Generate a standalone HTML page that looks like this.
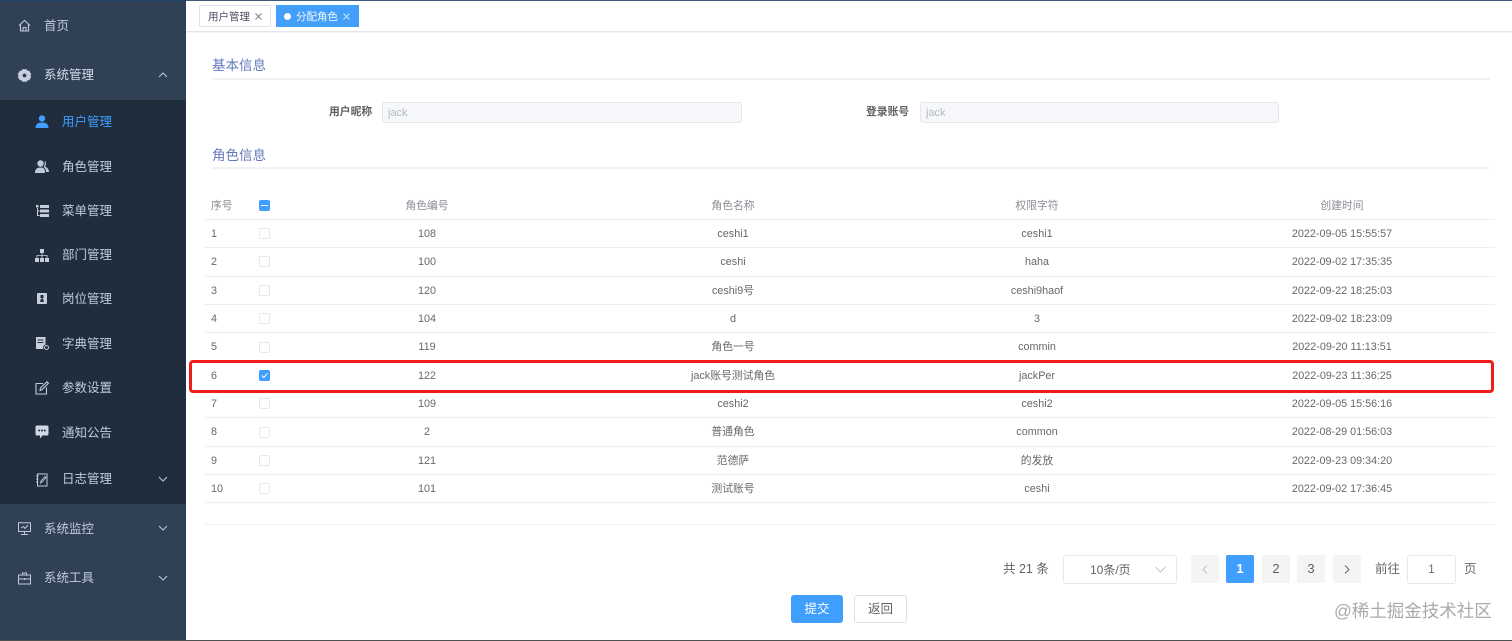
<!DOCTYPE html>
<html lang="zh-CN">
<head>
<meta charset="utf-8">
<title>分配角色</title>
<style>
html,body{margin:0;padding:0;background:#fff}
body{width:1512px;height:641px;position:relative;overflow:hidden;font-family:"Liberation Sans","Noto Sans CJK SC",sans-serif;font-size:10.8px;color:#66686d}
.a{position:absolute;white-space:nowrap}
.side{position:absolute;left:0;top:0;width:186px;height:641px;background:#304156}
.sub{position:absolute;left:0;top:100px;width:186px;height:404px;background:#1f2d3d}
.m{position:absolute;white-space:nowrap;font-size:12.5px;line-height:16px;color:#bfcbd9}
.ic{position:absolute;overflow:visible}
.line{position:absolute;background:#ebeef5;height:1px;left:204px;width:1291px}
.hr{position:absolute;left:212px;width:1278px;height:2px;background:#f1f2f4}
.c{position:absolute;white-space:nowrap;transform:translateX(-50%);line-height:14px;color:#66686d}
.h{color:#8a8d94;font-weight:400}
.cb{position:absolute;left:259px;width:9px;height:9px;border:1px solid #e6e8ec;border-radius:2px;background:#fff;box-sizing:content-box}
.sec{position:absolute;left:212px;font-size:13.5px;line-height:18px;color:#6379bb;white-space:nowrap}
.inp{position:absolute;top:102px;height:19px;background:#f5f7fa;border:1px solid #e4e7ed;border-radius:3px;color:#b5b8be;font-size:11px;line-height:20px;padding-left:5px;box-sizing:content-box}
.lab{position:absolute;top:105px;font-size:10.8px;line-height:14px;font-weight:700;color:#606266;white-space:nowrap}
.pg{position:absolute;top:555px;width:28px;height:28px;background:#f4f4f5;border-radius:2px;text-align:center;line-height:27px;font-size:13px;color:#606266}
</style>
</head>
<body>
<div class="a" style="left:186px;top:0;width:1326px;height:1px;background:#3d5a78"></div>

<!-- Sidebar -->
<div class="side"></div>
<div class="a" style="left:0;top:0;width:186px;height:1px;background:#20406e"></div>
<div class="sub"></div>

<svg class="ic" style="left:18px;top:19px" width="13" height="13" viewBox="0 0 13 13" fill="none" stroke="#bfcbd9" stroke-width="1.1"><path d="M1 6.5 6.5 1.5 12 6.5M2.5 5.5V12H10.500V5.500M5 12V8.500H8V12"/></svg>
<div class="m" style="left:44px;top:18px">首页</div>

<svg class="ic" style="left:18px;top:69px" width="13" height="13" viewBox="0 0 13 13"><path fill="#c6d0dc" fill-rule="evenodd" d="M4.200.3H8.800L9.400 1.800 11.200 1.700 13.300 5.300 12.300 6.500 13.300 7.700 11.200 11.300 9.400 11.200 8.800 12.700H4.200L3.600 11.200 1.800 11.300-.3 7.700.7 6.500-.3 5.300 1.800 1.700 3.600 1.800ZM6.500 4.600A1.900 1.900 0 1 0 6.500 8.400 1.900 1.900 0 1 0 6.500 4.600Z"/></svg>
<div class="m" style="left:44px;top:67px;color:#d5dce5">系统管理</div>
<svg class="ic" style="left:158px;top:72px" width="10" height="6" viewBox="0 0 10 6" fill="none" stroke="#bfcbd9"><path d="M1 5 5 1 9 5"/></svg>

<svg class="ic" style="left:35px;top:115px" width="14" height="13" viewBox="0 0 14 13"><circle cx="7" cy="3.500" r="3.200" fill="#409eff"/><path fill="#409eff" d="M.5 13C.5 9 3 7.500 7 7.500S13.500 9 13.500 13Z"/></svg>
<div class="m" style="left:62px;top:114px;color:#409eff">用户管理</div>

<svg class="ic" style="left:35px;top:160px" width="14" height="13" viewBox="0 0 14 13"><circle cx="5.500" cy="3.500" r="3.200" fill="#bfcbd9"/><path fill="#bfcbd9" d="M0 13C0 9 2 7.500 5.500 7.500S10 9 10 13Z"/><path fill="#bfcbd9" d="M9.500.8C11.500 1.500 11.500 5.500 9.800 6.500 12.500 7.500 14 9.500 14 12H11C11 9.500 10 8 8.500 7 10 5.500 10 2.500 9.500.8Z"/></svg>
<div class="m" style="left:62px;top:159px">角色管理</div>

<svg class="ic" style="left:36px;top:205px" width="13" height="12" viewBox="0 0 13 12" fill="#c6d0dc"><rect x="0" y="0" width="2.500" height="2.500"/><rect x="4" y="0" width="9" height="3"/><rect x="4" y="4.500" width="9" height="3"/><rect x="4" y="9" width="9" height="3"/><path d="M1 3H2V5.500H3.500V6.500H2V10H3.500V11H1Z"/></svg>
<div class="m" style="left:62px;top:203px">菜单管理</div>

<svg class="ic" style="left:35px;top:249px" width="14" height="13" viewBox="0 0 14 13" fill="#c6d0dc"><rect x="5" y="0" width="4" height="4"/><rect x="0" y="9" width="4" height="4"/><rect x="5" y="9" width="4" height="4"/><rect x="10" y="9" width="4" height="4"/><path d="M6.600 4H7.400V6H12.400V9H11.600V6.800H7.400V9H6.600V6.800H2.400V9H1.600V6H6.600Z"/></svg>
<div class="m" style="left:62px;top:247px">部门管理</div>

<svg class="ic" style="left:37px;top:293px" width="10" height="11" viewBox="0 0 10 11"><rect width="10" height="11" rx="1" fill="#c6d0dc"/><rect x="3.500" y="2" width="3" height="3" fill="#1f2d3d"/><path d="M3 9 4 5.500H6L7 9Z" fill="#1f2d3d"/></svg>
<div class="m" style="left:62px;top:291px">岗位管理</div>

<svg class="ic" style="left:35px;top:337px" width="14" height="13" viewBox="0 0 14 13"><path fill="#c6d0dc" d="M1 0H10.500V7.500A3 3 0 0 0 8.500 12H1Z"/><rect x="2.500" y="2.500" width="6" height="1" fill="#1f2d3d"/><rect x="2.500" y="5" width="6" height="1" fill="#1f2d3d"/><circle cx="11.500" cy="10.500" r="2" fill="none" stroke="#bfcbd9"/></svg>
<div class="m" style="left:62px;top:336px">字典管理</div>

<svg class="ic" style="left:35px;top:381px" width="14" height="14" viewBox="0 0 14 14" fill="none" stroke="#bfcbd9" stroke-width="1.100"><path d="M8 2.500H1V13H11.500V6.500"/><path d="M5 9.500 5.500 7 12 .8 13.500 2.300 7 8.800Z"/></svg>
<div class="m" style="left:62px;top:380px">参数设置</div>

<svg class="ic" style="left:35px;top:425px" width="14" height="14" viewBox="0 0 14 14"><path fill="#d0d9e4" d="M2 .5H12A1.500 1.500 0 0 1 13.500 2V9A1.500 1.500 0 0 1 12 10.500H7.500L5 13.500V10.500H2A1.500 1.500 0 0 1 .5 9V2A1.500 1.500 0 0 1 2 .5Z"/><circle cx="4.200" cy="5.500" r="1" fill="#1f2d3d"/><circle cx="7" cy="5.500" r="1" fill="#1f2d3d"/><circle cx="9.800" cy="5.500" r="1" fill="#1f2d3d"/></svg>
<div class="m" style="left:62px;top:425px">通知公告</div>

<svg class="ic" style="left:36px;top:473px" width="12" height="14" viewBox="0 0 12 14" fill="none" stroke="#bfcbd9"><path d="M1.500 1H11V13H1.500Z"/><path d="M0 3H2.500M0 6H2.500M0 9H2.500M4.500 10 5 8 9 3.500 10 4.500 6 9Z" stroke-width=".9"/></svg>
<div class="m" style="left:62px;top:471px">日志管理</div>
<svg class="ic" style="left:158px;top:476px" width="10" height="6" viewBox="0 0 10 6" fill="none" stroke="#bfcbd9"><path d="M1 1 5 5 9 1"/></svg>

<svg class="ic" style="left:18px;top:522px" width="13" height="13" viewBox="0 0 13 13" fill="none" stroke="#bfcbd9"><path d="M.5.800H12.500V9.500H.5ZM3 12.500H10M6.500 9.500V12.500M3 6 5.500 4.500 7 6.500 10 3"/></svg>
<div class="m" style="left:44px;top:521px">系统监控</div>
<svg class="ic" style="left:158px;top:525px" width="10" height="6" viewBox="0 0 10 6" fill="none" stroke="#bfcbd9"><path d="M1 1 5 5 9 1"/></svg>

<svg class="ic" style="left:18px;top:572px" width="13" height="13" viewBox="0 0 13 13" fill="none" stroke="#bfcbd9"><path d="M.5 3H12.500V12H.5ZM4.500 3V1H8.500V3M.5 7H12.500M6.500 6V8"/></svg>
<div class="m" style="left:44px;top:570px">系统工具</div>
<svg class="ic" style="left:158px;top:575px" width="10" height="6" viewBox="0 0 10 6" fill="none" stroke="#bfcbd9"><path d="M1 1 5 5 9 1"/></svg>
<div class="a" style="left:0;top:640px;width:1512px;height:1px;background:#4e5152"></div>

<!-- Tags bar -->
<div class="a" style="left:186px;top:31px;width:1326px;height:1px;background:#e4e5e7"></div>
<div class="a" style="left:186px;top:32px;width:1326px;height:1px;background:#f4f4f5"></div>
<div class="a" style="left:199px;top:5px;width:72px;height:22px;border:1px solid #dfe2e6;box-sizing:border-box;background:#fff"></div>
<div class="a" style="left:208px;top:10px;font-size:10.500px;line-height:14px;color:#495060">用户管理</div>
<svg class="ic" style="left:255px;top:13px" width="7" height="7" viewBox="0 0 7 7" stroke="#777"><path d="M.5.500 6.500 6.500M6.500.500.5 6.500" stroke-width=".9"/></svg>
<div class="a" style="left:276px;top:5px;width:83px;height:22px;background:#42a0fa"></div>
<div class="a" style="left:284px;top:13px;width:7px;height:7px;border-radius:50%;background:#fff"></div>
<div class="a" style="left:296px;top:10px;font-size:10.500px;line-height:14px;color:#f2f8ff">分配角色</div>
<svg class="ic" style="left:343px;top:13px" width="7" height="7" viewBox="0 0 7 7" stroke="#d5e9fd"><path d="M.5.500 6.500 6.500M6.500.500.5 6.500" stroke-width=".9"/></svg>

<!-- Basic info -->
<div class="sec" style="top:57px">基本信息</div>
<div class="hr" style="top:78px"></div>
<div class="lab" style="left:329px">用户昵称</div>
<div class="inp" style="left:382px;width:353px">jack</div>
<div class="lab" style="left:866px">登录账号</div>
<div class="inp" style="left:920px;width:352px">jack</div>
<div class="sec" style="top:147px">角色信息</div>
<div class="hr" style="top:167px"></div>

<!-- Table header -->
<div class="a h" style="left:211px;top:199px;line-height:14px;color:#8a8d94">序号</div>
<div class="a" style="left:259px;top:200px;width:11px;height:11px;border-radius:2px;background:#409eff"></div>
<div class="a" style="left:261px;top:205px;width:7px;height:1px;background:#fff"></div>
<div class="c h" style="left:427px;top:199px;color:#8a8d94">角色编号</div>
<div class="c h" style="left:733px;top:199px;color:#8a8d94">角色名称</div>
<div class="c h" style="left:1037px;top:199px;color:#8a8d94">权限字符</div>
<div class="c h" style="left:1342px;top:199px;color:#8a8d94">创建时间</div>

<div class="line" style="top:219px"></div>
<div class="line" style="top:247px"></div>
<div class="line" style="top:276px"></div>
<div class="line" style="top:304px"></div>
<div class="line" style="top:332px"></div>
<div class="line" style="top:417px"></div>
<div class="line" style="top:446px"></div>
<div class="line" style="top:474px"></div>
<div class="line" style="top:502px"></div>
<div class="line" style="top:524px;background:#eef0f5"></div>

<!-- Rows -->
<div class="a" style="left:211px;top:227px;line-height:14px">1</div><div class="cb" style="top:228px"></div><div class="c" style="left:427px;top:227px">108</div><div class="c" style="left:733px;top:227px">ceshi1</div><div class="c" style="left:1037px;top:227px">ceshi1</div><div class="c" style="left:1342px;top:227px">2022-09-05 15:55:57</div>
<div class="a" style="left:211px;top:255px;line-height:14px">2</div><div class="cb" style="top:256px"></div><div class="c" style="left:427px;top:255px">100</div><div class="c" style="left:733px;top:255px">ceshi</div><div class="c" style="left:1037px;top:255px">haha</div><div class="c" style="left:1342px;top:255px">2022-09-02 17:35:35</div>
<div class="a" style="left:211px;top:284px;line-height:14px">3</div><div class="cb" style="top:285px"></div><div class="c" style="left:427px;top:284px">120</div><div class="c" style="left:733px;top:284px">ceshi9号</div><div class="c" style="left:1037px;top:284px">ceshi9haof</div><div class="c" style="left:1342px;top:284px">2022-09-22 18:25:03</div>
<div class="a" style="left:211px;top:312px;line-height:14px">4</div><div class="cb" style="top:313px"></div><div class="c" style="left:427px;top:312px">104</div><div class="c" style="left:733px;top:312px">d</div><div class="c" style="left:1037px;top:312px">3</div><div class="c" style="left:1342px;top:312px">2022-09-02 18:23:09</div>
<div class="a" style="left:211px;top:340px;line-height:14px">5</div><div class="cb" style="top:342px"></div><div class="c" style="left:427px;top:340px">119</div><div class="c" style="left:733px;top:340px">角色一号</div><div class="c" style="left:1037px;top:340px">commin</div><div class="c" style="left:1342px;top:340px">2022-09-20 11:13:51</div>

<div class="a" style="left:211px;top:369px;line-height:14px">6</div>
<div class="a" style="left:259px;top:370px;width:11px;height:11px;border-radius:2px;background:#409eff"></div>
<svg class="ic" style="left:261px;top:372px" width="7" height="7" viewBox="0 0 7 7" fill="none" stroke="#fff"><path d="M.8 3.500 2.800 5.500 6.500 1.300"/></svg>
<div class="c" style="left:427px;top:369px">122</div><div class="c" style="left:733px;top:369px">jack账号测试角色</div><div class="c" style="left:1037px;top:369px">jackPer</div><div class="c" style="left:1342px;top:369px">2022-09-23 11:36:25</div>

<div class="a" style="left:211px;top:397px;line-height:14px">7</div><div class="cb" style="top:398px"></div><div class="c" style="left:427px;top:397px">109</div><div class="c" style="left:733px;top:397px">ceshi2</div><div class="c" style="left:1037px;top:397px">ceshi2</div><div class="c" style="left:1342px;top:397px">2022-09-05 15:56:16</div>
<div class="a" style="left:211px;top:425px;line-height:14px">8</div><div class="cb" style="top:427px"></div><div class="c" style="left:427px;top:425px">2</div><div class="c" style="left:733px;top:425px">普通角色</div><div class="c" style="left:1037px;top:425px">common</div><div class="c" style="left:1342px;top:425px">2022-08-29 01:56:03</div>
<div class="a" style="left:211px;top:454px;line-height:14px">9</div><div class="cb" style="top:455px"></div><div class="c" style="left:427px;top:454px">121</div><div class="c" style="left:733px;top:454px">范德萨</div><div class="c" style="left:1037px;top:454px">的发放</div><div class="c" style="left:1342px;top:454px">2022-09-23 09:34:20</div>
<div class="a" style="left:211px;top:482px;line-height:14px">10</div><div class="cb" style="top:483px"></div><div class="c" style="left:427px;top:482px">101</div><div class="c" style="left:733px;top:482px">测试账号</div><div class="c" style="left:1037px;top:482px">ceshi</div><div class="c" style="left:1342px;top:482px">2022-09-02 17:36:45</div>

<!-- Red highlight -->
<div class="a" style="left:189px;top:360px;width:1305px;height:33px;box-sizing:border-box;border:3px solid #ee1c1c;border-radius:4px"></div>

<!-- Pagination -->
<div class="a" style="left:1003px;top:561px;font-size:12.500px;line-height:16px;color:#606266">共 21 条</div>
<div class="a" style="left:1063px;top:555px;width:114px;height:29px;box-sizing:border-box;border:1px solid #e4e7ed;border-radius:3px"></div>
<div class="a" style="left:1090px;top:562px;font-size:12px;line-height:16px;color:#606266">10条/页</div>
<svg class="ic" style="left:1155px;top:566px" width="11" height="7" viewBox="0 0 11 7" fill="none" stroke="#c0c4cc"><path d="M.5 1 5.500 6 10.500 1"/></svg>
<div class="pg" style="left:1191px"><svg width="6" height="9" viewBox="0 0 6 9" fill="none" stroke="#c0c4cc" style="margin-top:10px"><path d="M5 .5 1 4.500 5 8.500"/></svg></div>
<div class="pg" style="left:1226px;background:#409eff;color:#fff;font-weight:700">1</div>
<div class="pg" style="left:1262px">2</div>
<div class="pg" style="left:1297px">3</div>
<div class="pg" style="left:1333px"><svg width="6" height="9" viewBox="0 0 6 9" fill="none" stroke="#606266" style="margin-top:10px"><path d="M1 .5 5 4.500 1 8.500"/></svg></div>
<div class="a" style="left:1375px;top:561px;font-size:12.500px;line-height:16px">前往</div>
<div class="a" style="left:1407px;top:555px;width:49px;height:29px;box-sizing:border-box;border:1px solid #e4e7ed;border-radius:3px;text-align:center;line-height:28px;font-size:11.500px">1</div>
<div class="a" style="left:1464px;top:561px;font-size:12.500px;line-height:16px">页</div>

<!-- Buttons -->
<div class="a" style="left:791px;top:595px;width:52px;height:28px;background:#409eff;border-radius:3px;color:#fff;text-align:center;line-height:28px;font-size:12.500px">提交</div>
<div class="a" style="left:854px;top:595px;width:53px;height:28px;box-sizing:border-box;border:1px solid #dcdfe6;border-radius:3px;text-align:center;line-height:26px;font-size:12.500px;color:#606266">返回</div>

<!-- Watermark -->
<div class="a" style="left:1334px;top:601px;font-size:17.500px;line-height:20px;color:#a8aaac">@稀土掘金技术社区</div>
</body>
</html>
